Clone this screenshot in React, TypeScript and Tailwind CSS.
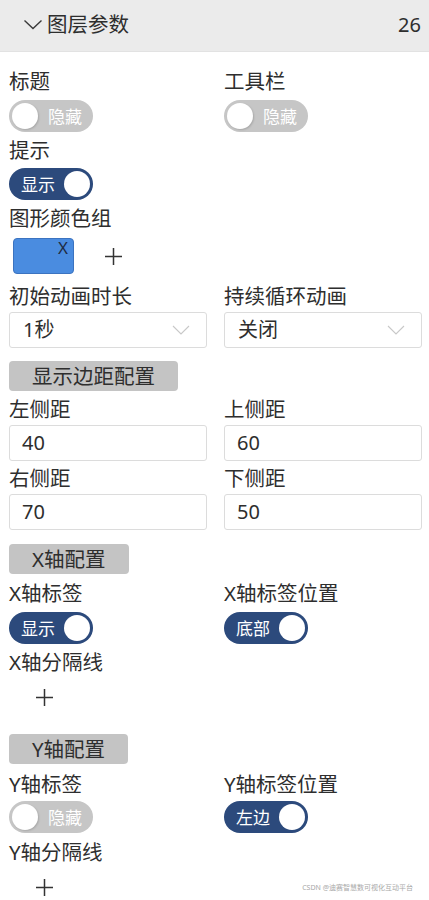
import React from "react";

const FONT = { fontFamily: '"Noto Sans", "Noto Sans CJK SC", sans-serif' };

function Label({ children, className = "" }: { children: React.ReactNode; className?: string }) {
  return <div className={`h-[28px] text-[20.5px] leading-[28px] text-[#2e2e2e] whitespace-nowrap ${className}`}>{children}</div>;
}

function Toggle({ on, text, className = "" }: { on: boolean; text: string; className?: string }) {
  return (
    <div
      className={`flex h-[32px] w-[84px] items-center justify-between rounded-full px-[3px] ${
        on ? "bg-[#2c4a7c]" : "bg-[#c6c6c6]"
      } ${className}`}
    >
      {on ? (
        <>
          <span className="pl-[9px] text-[17px] leading-none text-white">{text}</span>
          <span className="h-[26px] w-[26px] rounded-full bg-white" />
        </>
      ) : (
        <>
          <span className="h-[26px] w-[26px] rounded-full bg-white shadow-[1px_1px_2px_rgba(0,0,0,0.15)]" />
          <span className="pr-[8px] text-[17px] leading-none text-white">{text}</span>
        </>
      )}
    </div>
  );
}

function Select({ value }: { value: string }) {
  return (
    <div className="flex h-[36px] items-center justify-between rounded-[3px] border border-[#dcdcdc] bg-white pl-[13px] pr-[16px]">
      <span className="text-[20px] leading-none text-[#2e2e2e]">{value}</span>
      <svg width="18" height="10" viewBox="0 0 18 10" fill="none">
        <path d="M1 1l8 8 8-8" stroke="#c8c8c8" strokeWidth="1.1" />
      </svg>
    </div>
  );
}

function Input({ value }: { value: string }) {
  return (
    <div className="flex h-[36px] items-center rounded-[3px] border border-[#dcdcdc] bg-white pl-[12px]">
      <span className="text-[20px] leading-none text-[#2e2e2e]">{value}</span>
    </div>
  );
}

function SectionButton({ children, className = "" }: { children: React.ReactNode; className?: string }) {
  return (
    <div className={`flex h-[30px] w-fit items-center rounded-[4px] bg-[#c4c4c4] px-[23px] text-[20.5px] leading-none text-[#2e2e2e] ${className}`}>
      {children}
    </div>
  );
}

function Plus() {
  return (
    <div className="flex h-[36px] w-[62px] items-center justify-center">
      <svg width="17" height="17" viewBox="0 0 17 17">
        <path d="M8.5 0v17M0 8.5h17" stroke="#333" strokeWidth="1.5" />
      </svg>
    </div>
  );
}

export default function App() {
  return (
    <div className="min-h-[900px] w-[429px] bg-white" style={FONT}>
      <div className="flex h-[52px] items-center justify-between border-b border-[#e2e2e2] bg-[#ebebeb] pb-[2px] pl-[23px] pr-[8px]">
        <div className="flex items-center gap-[4px]">
          <svg width="20" height="11" viewBox="0 0 20 11" fill="none">
            <path d="M1.5 1.5l8.5 8 8.5-8" stroke="#3a3a3a" strokeWidth="1.4" />
          </svg>
          <span className="text-[20.5px] leading-none text-[#2e2e2e]">图层参数</span>
        </div>
        <span className="text-[20px] leading-none text-[#2e2e2e]">26</span>
      </div>

      <div className="pl-[9px] pr-[7px] pt-[15px]">
        <div className="grid grid-cols-[198px_198px] gap-x-[17px]">
          <div>
            <Label>标题</Label>
            <Toggle on={false} text="隐藏" className="mt-[5px]" />
          </div>
          <div>
            <Label>工具栏</Label>
            <Toggle on={false} text="隐藏" className="mt-[5px]" />
          </div>
        </div>

        <Label className="mt-[4px]">提示</Label>
        <Toggle on text="显示" className="mt-[4px]" />

        <Label className="mt-[4px]">图形颜色组</Label>
        <div className="mt-[6px] flex items-center gap-[8px] pl-[4px]">
          <div className="relative h-[36px] w-[61px] rounded-[4px] border border-[#3b73c0] bg-[#4a8ce0]">
            <span className="absolute right-[5px] top-[0px] text-[17px] leading-none text-[#1f2d44]">X</span>
          </div>
          <Plus />
        </div>

        <div className="mt-[8px] grid grid-cols-[198px_198px] gap-x-[17px]">
          <div>
            <Label>初始动画时长</Label>
            <div className="mt-[2px]">
              <Select value="1秒" />
            </div>
          </div>
          <div>
            <Label>持续循环动画</Label>
            <div className="mt-[2px]">
              <Select value="关闭" />
            </div>
          </div>
        </div>

        <SectionButton className="mt-[13px]">显示边距配置</SectionButton>

        <div className="mt-[4px] grid grid-cols-[198px_198px] gap-x-[17px]">
          <div>
            <Label>左侧距</Label>
            <div className="mt-[2px]">
              <Input value="40" />
            </div>
            <Label className="mt-[3px]">右侧距</Label>
            <div className="mt-[2px]">
              <Input value="70" />
            </div>
          </div>
          <div>
            <Label>上侧距</Label>
            <div className="mt-[2px]">
              <Input value="60" />
            </div>
            <Label className="mt-[3px]">下侧距</Label>
            <div className="mt-[2px]">
              <Input value="50" />
            </div>
          </div>
        </div>

        <SectionButton className="mt-[14px]">X轴配置</SectionButton>
        <div className="mt-[5px] grid grid-cols-[198px_198px] gap-x-[17px]">
          <div>
            <Label>X轴标签</Label>
            <Toggle on text="显示" className="mt-[5px]" />
          </div>
          <div>
            <Label>X轴标签位置</Label>
            <Toggle on text="底部" className="mt-[5px]" />
          </div>
        </div>
        <Label className="mt-[4px]">X轴分隔线</Label>
        <div className="mt-[3px] pl-[4px]">
          <Plus />
        </div>

        <SectionButton className="mt-[19px]">Y轴配置</SectionButton>
        <div className="mt-[6px] grid grid-cols-[198px_198px] gap-x-[17px]">
          <div>
            <Label>Y轴标签</Label>
            <Toggle on={false} text="隐藏" className="mt-[3px]" />
          </div>
          <div>
            <Label>Y轴标签位置</Label>
            <Toggle on text="左边" className="mt-[3px]" />
          </div>
        </div>
        <Label className="mt-[5px]">Y轴分隔线</Label>
        <div className="mt-[3px] flex items-center justify-between pl-[4px] pr-[9px]">
          <Plus />
          <span className="text-[7px] leading-none text-[#a8a8a8]">CSDN @迪赛智慧数可视化互动平台</span>
        </div>
      </div>
    </div>
  );
}
